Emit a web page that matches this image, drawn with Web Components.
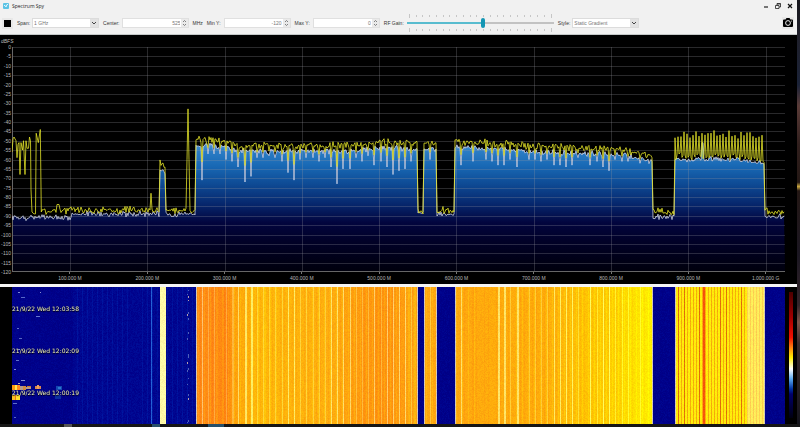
<!DOCTYPE html>
<html lang="en">
<head>
<meta charset="utf-8">
<meta name="viewport" content="width=device-width, initial-scale=1">
<title>Spectrum Spy</title>
<style>
	body {
		margin: 0;
		font: 5px/6px "Liberation Sans", Arial, sans-serif;
		background: #111;
	}
</style>
</head>
<body>
<spy-desktop>
	<spy-window>
		<span slot="title">Spectrum Spy</span>
		<spy-toolbar slot="toolbar">
			<icon-button name="stop" label="Stop"></icon-button>
			<combo-box options="1 GHz|500 MHz|100 MHz">Span:</combo-box>
			<spin-box value="525" unit="MHz">Center:</spin-box>
			<spin-box value="-120">Min Y:</spin-box>
			<spin-box value="0">Max Y:</spin-box>
			<gain-slider value="52">RF Gain:</gain-slider>
			<combo-box options="Static Gradient|Dynamic Gradient|Simple Curve">Style:</combo-box>
			<icon-button slot="end" name="camera" label="Take snapshot"></icon-button>
		</spy-toolbar>
		<spectrum-plot></spectrum-plot>
		<water-fall>
			<time>21/9/22 Wed 12:03:58</time>
			<time>21/9/22 Wed 12:02:09</time>
			<time>21/9/22 Wed 12:00:19</time>
		</water-fall>
	</spy-window>
</spy-desktop>

<script>
	// shared helpers

	function define(name, html, setup) {
		customElements.define(name, class extends HTMLElement {
			constructor() {
				super();
				this.attachShadow({ mode: 'open' });
			}

			connectedCallback() {
				if (this.shadowRoot.firstChild) {
					return;
				}
				this.shadowRoot.innerHTML = html;
				if (setup) {
					setup(this, this.shadowRoot);
				}
			}
		});
	}

	function random(seed) {
		return function () {
			seed = (seed * 1664525 + 1013904223) >>> 0;
			return seed / 4294967296;
		};
	}

	// linear interpolation over [[x, v], ...], v is a number or an rgb list
	function at(stops, x) {
		if (x <= stops[0][0]) {
			return stops[0][1];
		}
		for (let i = 1; i < stops.length; i++) {
			const [x1, b] = stops[i];
			if (x <= x1) {
				const [x0, a] = stops[i - 1];
				const t = (x - x0) / (x1 - x0);
				return Array.isArray(a) ? a.map((v, k) => v + (b[k] - v) * t) : a + (b - a) * t;
			}
		}
		return stops[stops.length - 1][1];
	}

	function watch(canvas, draw) {
		const run = () => {
			canvas.width = canvas.clientWidth;
			canvas.height = canvas.clientHeight;
			if (canvas.width && canvas.height) {
				draw(canvas.getContext('2d'), canvas.width, canvas.height);
			}
		};
		run();
		new ResizeObserver(run).observe(canvas);
	}

	// The sweep is 773 bins wide, 25 MHz to 1025 MHz.
	const BINS = 773;

	// occupied bands: first bin, last bin, peak level in dB along the band
	const BANDS = [
		[148, 153, [[148, -61.5], [153, -64]]],
		[184, 405, [[184, -49.5], [215, -50], [226, -52.5], [340, -52.5], [370, -50.5], [405, -51.5]]],
		[412, 424, [[412, -51.5], [424, -51.5]]],
		[443, 640, [[443, -50.5], [490, -51.5], [530, -53], [590, -54], [615, -55], [640, -58]]],
		[663, 752, [[663, -58], [720, -58], [752, -60.5]]]
	];

	// notches: bin -> bottom in dB
	const NOTCHES = {
		190: -71, 196: -57, 202: -57, 208: -57, 214: -60, 220: -61, 226: -64, 233: -72, 239: -69, 245: -59,
		251: -59, 257: -58, 263: -59, 270: -61, 276: -67, 282: -71, 288: -60, 294: -59, 301: -59, 307: -61,
		313: -59, 319: -64, 325: -73, 331: -65, 338: -65, 344: -59, 350: -61, 356: -58, 362: -63, 369: -61,
		375: -64, 381: -68, 387: -66, 393: -65, 399: -61, 418: -60, 449: -63, 461: -61, 474: -60, 480: -61,
		486: -63, 492: -63, 498: -60, 505: -64, 517: -60, 523: -60, 529: -61, 535: -60, 542: -63, 548: -63,
		554: -64, 560: -63, 566: -59, 578: -63, 585: -61, 591: -64, 597: -66, 603: -60, 610: -61, 616: -61,
		628: -62
	};

	// peak hold of the low end, where the carriers come and go
	const LOW_END = [
		[0, -56], [1, -49], [2, -48], [4, -50], [5, -59], [6, -52], [7, -51], [8, -68], [9, -51],
		[10.5, -55], [11.5, -50], [13, -68], [14, -50], [15, -54], [16.5, -54], [17.5, -48],
		[18.5, -50], [19, -76], [20, -88], [22, -89], [23.5, -89], [24.2, -46], [26.3, -51],
		[28.3, -44], [29.3, -88]
	];

	function bandAt(i) {
		return BANDS.find(([from, to]) => i >= from && i <= to);
	}

	function sweep() {
		const rnd = random(7);
		const peak = [];
		const live = [];
		for (let i = 0; i < BINS; i++) {
			const band = bandAt(i);
			const n = () => (rnd() + rnd() - 1);
			if (band) {
				const level = at(band[2], i);
				const last = band === BANDS[4];
				let p = level + n() * 2.4;
				let l = level - (last ? 2 : 3) + n() * 1.8;
				if (NOTCHES[i]) {
					l = NOTCHES[i];
					p = level + (l - level) * 0.55;
				}
				if (last && i % 3 === 0) {
					p = -49 + rnd() * 4 + (i > 690 && i < 725 ? 1 : 0);
				}
				if (last && (i === 690 || i === 691)) {
					l = -51;
				}
				peak.push([i, p]);
				live.push([i, l]);
			} else {
				const right = i > 600;
				let p = (right ? -88 : -87) + n() * 2.4;
				if (i === 139) {
					p = -78;
				}
				if (i === 176) {
					p = -33;
				} else if (i === 175 || i === 177) {
					p = -60;
				}
				if (i > 44 && i < 48) {
					p = -84;
				}
				if (i >= 30) {
					peak.push([i, p]);
				}
				live.push([i, (i < 60 ? -91 : right ? -90.5 : -89) + n() * 2]);
			}
		}
		return { peak: LOW_END.concat(peak), live };
	}

	// window shell

	define('spy-desktop', `
		<style>
			:host {
				display: grid;
				grid-template: 1fr 3px / 1fr 3px;
				min-height: 100vh;
				background: #111;
			}
			.wall {
				background: linear-gradient(#15151c, #20202a 8%, #1b2338 20%, #5a3c38 25%, #31201e 34%, #241815 43%, #c9a640 44%, #241815 45%, #1b1722 60%, #33252a 72%, #7a5348 76%, #3a2a2a 81%, #14141c);
			}
			.bar {
				grid-column: 1 / -1;
				background: linear-gradient(90deg, #161616 8%, #555 8% 9%, #161616 9%, #161616 19%, #27506a 19% 20%, #161616 20% 26%, #27506a 26% 28%, #161616 28%);
			}
		</style>
		<slot></slot>
		<div class="wall"></div>
		<div class="bar"></div>
	`);

	define('spy-window', `
		<style>
			:host {
				display: flex;
				flex-direction: column;
				background: #000;
			}
			header {
				display: flex;
				align-items: center;
				height: 12px;
				padding: 0 3px;
				gap: 3px;
				background: #f1f1f1;
				color: #222;
				font-family: "Open Sans", sans-serif;
			}
			.title {
				flex: 1;
			}
			nav {
				display: flex;
				gap: 4px;
			}
			button {
				display: block;
				width: 8px;
				height: 8px;
				padding: 0;
				border: 0;
				background: none;
			}
			svg {
				display: block;
			}
		</style>
		<header>
			<svg width="6" height="6" viewBox="0 0 6 6"><rect width="6" height="6" rx="1" fill="#5cc3e4"/><path d="M1 2.5h1l1 1.5 1-2.500h1" fill="none" stroke="#e2f7ff"/></svg>
			<span class="title"><slot name="title"></slot></span>
			<nav>
				<button aria-label="Minimize"><svg width="8" height="8"><path d="M2 5h4" stroke="#222" stroke-width="1.200"/></svg></button>
				<button aria-label="Restore"><svg width="8" height="8"><path d="M1.500 3.500h3.500v3h-3.500zM3 3.500v-2h3.500v3.500h-1.500M3 2h3.500" fill="none" stroke="#222" stroke-width=".8"/></svg></button>
				<button aria-label="Close"><svg width="8" height="8"><path d="M2 2l4 4M6 2l-4 4" stroke="#111" stroke-width="1.200"/></svg></button>
			</nav>
		</header>
		<slot name="toolbar"></slot>
		<slot></slot>
	`);

	// toolbar and its controls

	define('spy-toolbar', `
		<style>
			:host {
				display: flex;
				align-items: center;
				gap: 4px;
				height: 22px;
				padding: 0 3px 0 2px;
				background: #f1f1f1;
				border-bottom: 1px solid #c4c8c8;
				color: #333;
			}
			.end {
				margin-left: auto;
			}
		</style>
		<slot></slot>
		<div class="end"><slot name="end"></slot></div>
	`);

	const ICONS = {
		stop: '<path d="M2 2h7v7H2z"/>',
		camera: '<path d="M1 3.500Q1 2.500 2 2.500h1.500L4.500 1h3l1 1.500H10q1 0 1 1V9q0 1-1 1H2q-1 0-1-1z"/><circle cx="6" cy="6" r="2.400" fill="none" stroke="#fff" stroke-width=".9"/><circle cx="9.600" cy="4" r=".5" fill="#fff"/>'
	};

	define('icon-button', `
		<style>
			:host {
				display: block;
			}
			button {
				display: block;
				padding: 0;
				border: 0;
				background: #e8e8e8;
			}
			svg {
				display: block;
			}
		</style>
		<button></button>
	`, (host, root) => {
		const size = host.getAttribute('name') === 'camera' ? 12 : 11;
		const button = root.querySelector('button');
		button.setAttribute('aria-label', host.getAttribute('label'));
		button.innerHTML = `<svg width="${size}" height="${size}">${ICONS[host.getAttribute('name')]}</svg>`;
	});

	define('combo-box', `
		<style>
			:host {
				display: flex;
				align-items: center;
				gap: 2px;
			}
			.box {
				display: grid;
				grid-template-columns: 1fr 8px;
				width: 67px;
				height: 10px;
				box-sizing: border-box;
				border: 1px solid #dcdcdc;
				background: #fff;
			}
			select {
				grid-area: 1 / 1 / 2 / 3;
				appearance: none;
				min-width: 0;
				padding: 0 9px 0 1px;
				border: 0;
				background: none;
				color: #777;
				font: inherit;
			}
			svg {
				grid-area: 1 / 2;
				background: #e2e2e2;
				pointer-events: none;
			}
		</style>
		<label for="field"><slot></slot></label>
		<div class="box">
			<select id="field"></select>
			<svg width="8" height="8"><path d="M2 3l2 2 2-2" fill="none" stroke="#444"/></svg>
		</div>
	`, (host, root) => {
		root.querySelector('select').innerHTML = host.getAttribute('options').split('|').map(o => `<option>${o}</option>`).join('');
	});

	define('spin-box', `
		<style>
			:host {
				display: flex;
				align-items: center;
				gap: 3px;
			}
			.box {
				display: grid;
				grid-template: 1fr 1fr / 1fr 7px;
				width: 67px;
				height: 10px;
				box-sizing: border-box;
				border: 1px solid #e0e0e0;
				background: #fff;
			}
			input {
				grid-row: 1 / 3;
				appearance: textfield;
				min-width: 0;
				padding: 0 1px;
				border: 0;
				background: none;
				color: #777;
				font: inherit;
				text-align: right;
			}
			input::-webkit-inner-spin-button {
				display: none;
			}
			button {
				padding: 0;
				border: 0;
				background: #eaeaea;
			}
			svg {
				display: block;
				margin: auto;
			}
		</style>
		<label for="field"><slot></slot></label>
		<div class="box">
			<input id="field" type="number">
			<button class="up" aria-label="Increase"><svg width="5" height="4"><path d="M1 3l1.500-1.500L4 3" fill="none" stroke="#666" stroke-width=".8"/></svg></button>
			<button class="down" aria-label="Decrease"><svg width="5" height="4"><path d="M1 1l1.500 1.500L4 1" fill="none" stroke="#666" stroke-width=".8"/></svg></button>
		</div>
	`, (host, root) => {
		const input = root.querySelector('input');
		input.value = host.getAttribute('value');
		root.querySelector('.up').addEventListener('click', () => input.stepUp());
		root.querySelector('.down').addEventListener('click', () => input.stepDown());
		if (host.hasAttribute('unit')) {
			const unit = document.createElement('span');
			unit.textContent = host.getAttribute('unit');
			root.append(unit);
		}
	});

	define('gain-slider', `
		<style>
			:host {
				display: flex;
				align-items: center;
				gap: 3px;
			}
			.box {
				display: flex;
				flex-direction: column;
				width: 147px;
			}
			.ticks {
				display: flex;
				justify-content: space-between;
				align-items: center;
				height: 4px;
				padding: 0 2px;
			}
			i {
				width: 1px;
				height: 2px;
				background: #c6c6c6;
			}
			i:first-child, i:last-child {
				height: 4px;
			}
			input {
				appearance: none;
				width: 100%;
				height: 10px;
				margin: 0;
				background: linear-gradient(90deg, #58bccf var(--value), #c2c2c2 var(--value)) 0 4px / 100% 2px no-repeat;
			}
			input::-webkit-slider-thumb {
				appearance: none;
				width: 4px;
				height: 10px;
				border-radius: 2px;
				background: #1496b4;
			}
		</style>
		<label for="gain"><slot></slot></label>
		<div class="box">
			<div class="ticks"></div>
			<input id="gain" type="range">
			<div class="ticks"></div>
		</div>
	`, (host, root) => {
		const input = root.querySelector('input');
		const paint = () => input.style.setProperty('--value', input.value + '%');
		root.querySelectorAll('.ticks').forEach(t => {
			t.innerHTML = '<i></i>'.repeat(22);
		});
		input.value = host.getAttribute('value');
		input.addEventListener('input', paint);
		paint();
	});

	// spectrum

	define('spectrum-plot', `
		<style>
			:host {
				flex: 249 1 0;
				display: grid;
				grid-template: 12px minmax(0, 1fr) 12px / 12px minmax(0, 1fr) 12px;
				min-height: 190px;
				overflow: hidden;
				color: #b8b8b8;
			}
			.unit {
				grid-area: 1 / 1 / 2 / 3;
				padding: 3px 0 0 1px;
				font-style: italic;
			}
			.levels {
				grid-area: 2 / 1;
				display: flex;
				flex-direction: column;
				justify-content: space-between;
				margin: -3px 1px -3px 0;
				text-align: right;
			}
			canvas {
				grid-area: 2 / 2;
				width: 100%;
				height: 100%;
				min-height: 0;
			}
			.freqs {
				grid-area: 3 / 2;
				display: grid;
				grid-template-columns: 1fr repeat(10, 4fr);
				width: 102.5%;
				text-align: center;
				white-space: nowrap;
			}
			.freqs span:first-of-type {
				grid-column: 2;
			}
			.freqs span::before {
				content: "";
				display: block;
				width: 1px;
				height: 2px;
				margin: 0 auto 1px;
				background: #777;
			}
		</style>
		<div class="unit">dBFS</div>
		<div class="levels"></div>
		<canvas></canvas>
		<div class="freqs"></div>
	`, (host, root) => {
		let levels = '';
		for (let db = 0; db >= -120; db -= 5) {
			levels += `<span>${db}</span>`;
		}
		root.querySelector('.levels').innerHTML = levels;

		let freqs = '';
		for (let f = 100; f < 1000; f += 100) {
			freqs += `<span>${f}.000 M</span>`;
		}
		root.querySelector('.freqs').innerHTML = freqs + '<span>1.000.000 G</span>';

		const { peak, live } = sweep();
		watch(root.querySelector('canvas'), (ctx, w, h) => {
			const x = i => i / BINS * w;
			const y = db => -db / 120 * h;
			const trace = points => {
				ctx.beginPath();
				points.forEach(([i, db]) => ctx.lineTo(x(i), y(db)));
			};

			const fill = ctx.createLinearGradient(0, 0, 0, h);
			fill.addColorStop(0.4, '#68ace4');
			fill.addColorStop(0.46, '#2c7ec6');
			fill.addColorStop(0.53, '#1868b4');
			fill.addColorStop(0.61, '#0e4a94');
			fill.addColorStop(0.7, '#06266c');
			fill.addColorStop(0.78, '#02053e');
			fill.addColorStop(0.86, '#010128');
			fill.addColorStop(1, '#00000c');
			trace(live);
			ctx.lineTo(w, h);
			ctx.lineTo(0, h);
			ctx.fillStyle = fill;
			ctx.fill();

			ctx.fillStyle = 'rgba(150, 150, 160, .27)';
			for (let db = 0; db > -120; db -= 5) {
				ctx.fillRect(0, Math.round(y(db)), w, 1);
			}
			for (let f = 75; f < 1000; f += 100) {
				ctx.fillRect(Math.round(f / 1000 * w), 0, 1, h);
			}
			ctx.fillStyle = '#666';
			ctx.fillRect(0, 0, 1, h);
			ctx.fillRect(0, h - 1, w, 1);

			ctx.lineWidth = 1;
			ctx.lineJoin = 'bevel';
			ctx.strokeStyle = 'rgba(215, 220, 240, .75)';
			trace(live);
			ctx.stroke();
			ctx.strokeStyle = 'rgba(228, 228, 40, .8)';
			trace(peak);
			ctx.stroke();
		});
	});

	// waterfall

	const HEAT = [
		[0, [0, 0, 138]], [183, [0, 12, 150]],
		[184, [255, 140, 22]], [215, [255, 134, 16]], [222, [255, 160, 10]], [240, [255, 184, 8]],
		[320, [255, 174, 14]], [350, [255, 152, 14]], [375, [255, 148, 14]], [405, [255, 170, 16]],
		[425, [255, 164, 16]], [480, [255, 172, 12]], [530, [255, 172, 10]], [570, [255, 194, 4]],
		[600, [255, 206, 0]], [641, [255, 240, 0]]
	];

	function column(i) {
		const band = bandAt(i);
		if (!band) {
			if (i === 139) {
				return [36, 96, 214];
			}
			const lift = i > 60 && i < 184 ? (i % 5 === 0 ? 18 : 6) : 0;
			return [0, lift, 138 + lift];
		}
		if (band === BANDS[0]) {
			return [255, 250, 166];
		}
		if (i === band[0] || i === band[1]) {
			return [214, 200, 176];
		}
		if (band === BANDS[4]) {
			if (i >= 690 && i <= 693) {
				return i % 3 ? [244, 84, 12] : [255, 170, 10];
			}
			if (i > 734) {
				return i % 3 ? [255, 238, 90] : [255, 206, 80];
			}
			return i % 3 ? [255, 236, 10] : (i % 7 < 2 ? [226, 112, 8] : [246, 172, 10]);
		}
		const base = at(HEAT, i);
		if (NOTCHES[i]) {
			const deep = NOTCHES[i] < -62 ? 90 : 45;
			return [255, Math.min(255, base[1] + deep / 2 + 10), base[2] + deep];
		}
		const k = i % 6 === 0 ? 14 : i % 4 === 0 ? -8 : 0;
		return [255, base[1] + k, base[2]];
	}

	// short bursts: bin, row (0-1), width, height, colour
	const BURSTS = [
		[0, .715, 3, 5, '#ff9a10'], [3, .715, 2, 5, '#ffe850'], [5, .715, 3, 5, '#ff8c20'],
		[8, .72, 3, 4, '#b09a90'], [11, .72, 3, 4, '#d08a40'], [14, .73, 5, 2, '#b59a88'],
		[15, .72, 4, 1, '#c87c30'], [23, .72, 6, 3, '#d88850'], [25, .715, 2, 4, '#f0a060'],
		[0, .79, 3, 5, '#ffc020'], [3, .79, 1, 5, '#e87820'], [4, .79, 4, 5, '#ffe030'],
		[44, .72, 6, 4, '#1448b0'], [46, .73, 3, 2, '#2c78d0'], [43, .79, 6, 4, '#0c2ea0'],
		[9, .07, 4, 1, '#5868c8'], [6, .04, 2, 1, '#7c88d0'], [28, .04, 1, 1, '#8890d0'],
		[24, .21, 4, 1, '#6878d0'], [5, .3, 2, 1, '#6070c8'], [7, .37, 3, 1, '#5868c0'],
		[6, .45, 2, 1, '#8890d0'], [4, .53, 3, 1, '#6070c8'], [2, .6, 2, 1, '#7c88d0'],
		[9, .68, 4, 1, '#8890d0'], [6, .7, 2, 1, '#b0a8b0'], [1, .85, 4, 1, '#6070c8'],
		[2, .95, 2, 1, '#5868c0']
	];

	define('water-fall', `
		<style>
			:host {
				flex: 137 1 0;
				display: grid;
				grid-template: minmax(0, 1fr) / 12px minmax(0, 1fr) 4px 4px 4px;
				min-height: 130px;
				border-top: 3px solid #f4f4f4;
				color: #eef0c8;
				font: 6px/42px "DejaVu Sans", Verdana, sans-serif;
				text-shadow: 0 0 1px #000, 0 1px 1px #000;
			}
			canvas {
				grid-area: 1 / 2;
				width: 100%;
				height: 100%;
				min-height: 0;
			}
			.times {
				grid-area: 1 / 2;
				display: flex;
				flex-direction: column;
				padding-top: 1px;
				z-index: 1;
			}
			.scale {
				grid-area: 1 / 4;
				margin: 5px 0 6px;
				background: linear-gradient(#4c0000, #a00000 20%, #f01000 36%, #ff8010 44%, #ffee00 52%, #fff 61%, #58a8f0 69%, #0030a0 77%, #00006c 81%, #000010);
			}
		</style>
		<canvas></canvas>
		<div class="times"><slot></slot></div>
		<div class="scale"></div>
	`, (host, root) => {
		watch(root.querySelector('canvas'), (ctx, w, h) => {
			const rnd = random(21);
			const img = ctx.createImageData(w, h);
			for (let px = 0; px < w; px++) {
				const i = Math.floor(px / w * BINS);
				const rgb = column(i);
				const amp = bandAt(i) ? 18 : 14;
				for (let py = 0; py < h; py++) {
					const n = (rnd() - 0.5) * amp;
					const o = (py * w + px) * 4;
					img.data[o] = rgb[0] + (rgb[0] ? n / 2 : 0);
					img.data[o + 1] = rgb[1] + n;
					img.data[o + 2] = rgb[2] + (rgb[2] > 100 ? n : 0);
					img.data[o + 3] = 255;
				}
			}
			ctx.putImageData(img, 0, 0);

			BURSTS.forEach(([i, row, bw, bh, colour]) => {
				ctx.fillStyle = colour;
				ctx.fillRect(Math.round(i / BINS * w), Math.round(row * h), bw, bh);
			});
			// intermittent carrier at 253 MHz
			for (let py = 3; py < h; py += 2) {
				if (rnd() < 0.45) {
					ctx.fillStyle = rnd() < 0.3 ? '#b8a0a8' : '#5060b8';
					ctx.fillRect(Math.round((rnd() < 0.6 ? 176 : 175) / BINS * w), py, 1, 1 + Math.round(rnd()));
				}
			}
		});
	});
</script>
</body>
</html>
